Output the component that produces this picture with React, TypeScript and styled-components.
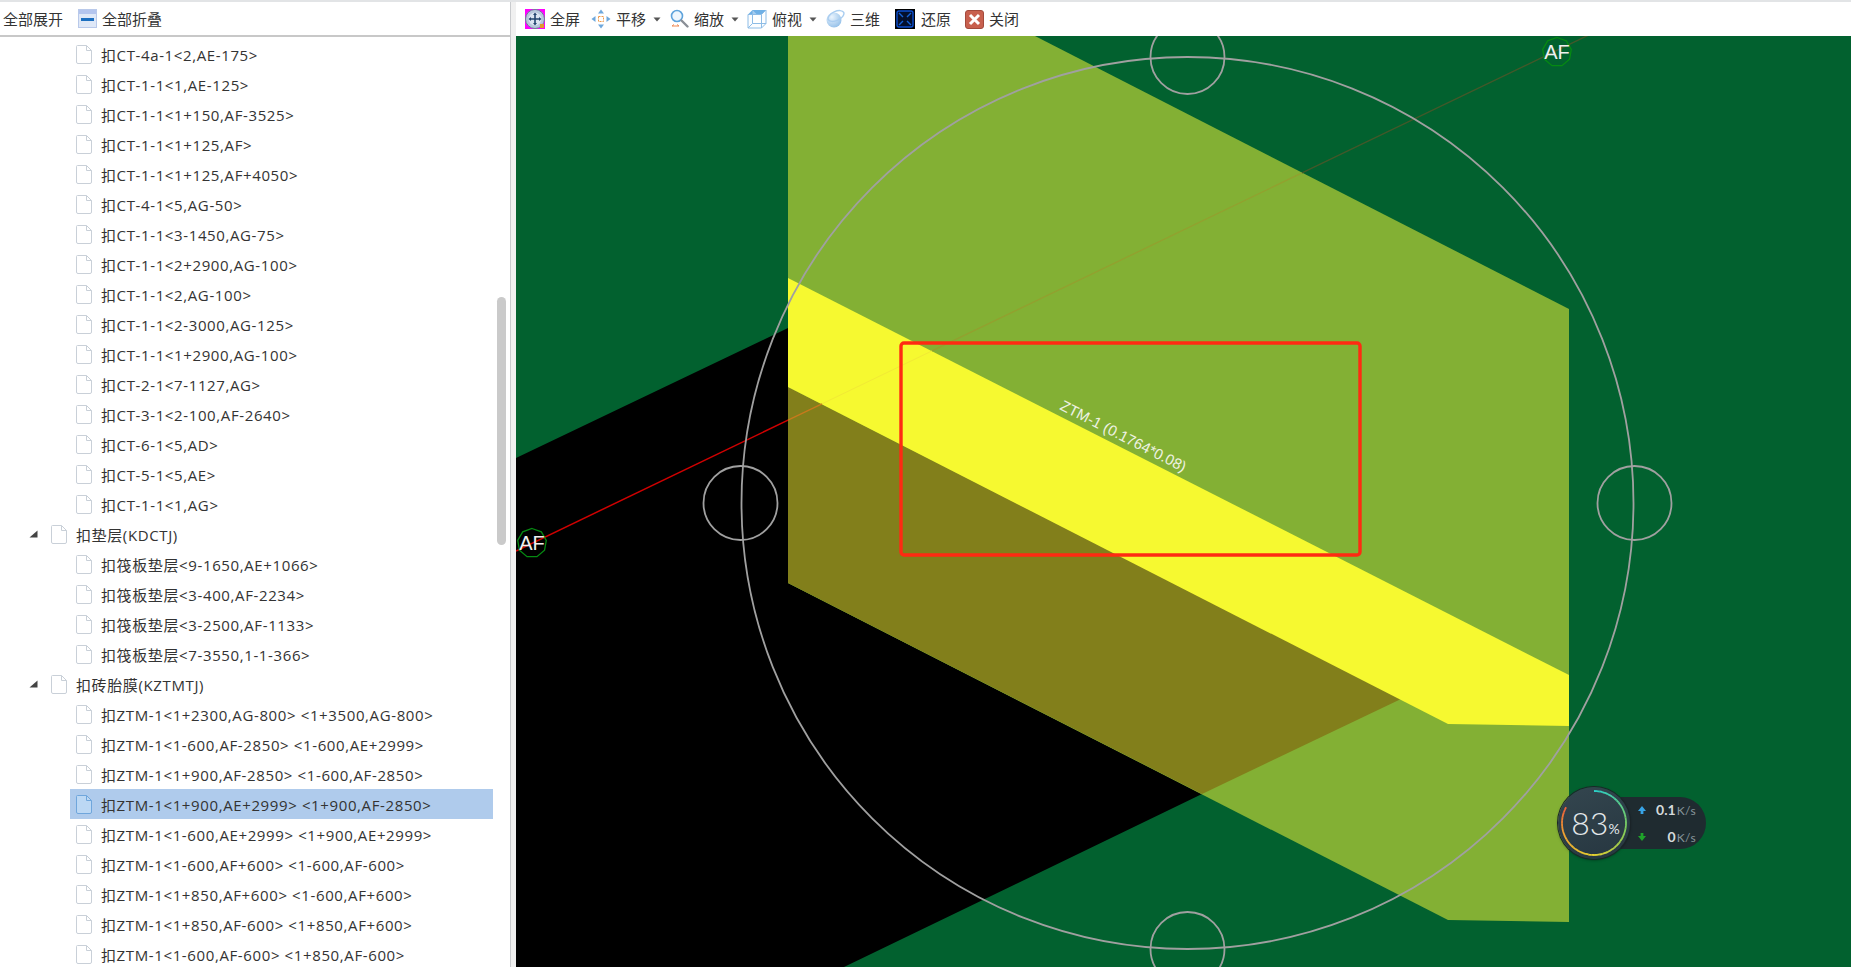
import React from "react";
import styled, { createGlobalStyle } from "styled-components";

const GlobalStyle = createGlobalStyle`
  html, body {
    margin: 0;
    padding: 0;
    height: 100%;
    overflow: hidden;
    background: #fff;
  }
  #root {
    height: 100%;
  }
`;

const Page = styled.div`
  display: flex;
  width: 1851px;
  height: 967px;
  overflow: hidden;
  box-sizing: border-box;
  border-top: 2px solid #e2e4e6;
  font-family: "Noto Sans CJK SC", "Noto Sans", sans-serif;
  font-size: 15px;
  color: #333;
  background: #f0f0f0;
`;

const LeftPane = styled.div`
  display: flex;
  flex-direction: column;
  width: 511px;
  flex: none;
  background: #fff;
  border-right: 1px solid #c9cbce;
  box-sizing: border-box;
`;

const RightPane = styled.div`
  display: flex;
  flex-direction: column;
  margin-left: 5px;
  width: 1335px;
  flex: none;
`;

const ToolbarLeft = styled.div`
  display: flex;
  align-items: center;
  height: 33px;
  flex: none;
  padding-left: 3px;
  background: #fff;
  border-bottom: 2px solid #c8c8c8;
`;

const ToolbarRight = styled.div`
  display: flex;
  align-items: center;
  height: 34px;
  flex: none;
  padding-left: 9px;
  background: #fff;
`;

const ToolButton = styled.div<{ $gap?: number; $mr?: number }>`
  display: flex;
  align-items: center;
  gap: ${(p) => p.$gap ?? 5}px;
  margin-right: ${(p) => p.$mr ?? 0}px;
  line-height: 20px;
  white-space: nowrap;
`;

const TreeArea = styled.div`
  display: flex;
  flex: 1;
  min-height: 0;
  overflow: hidden;
`;

const TreeList = styled.div`
  flex: 1;
  padding-top: 2px;
`;

const ScrollTrack = styled.div`
  width: 9px;
  flex: none;
  margin-right: 4px;
  padding-top: 260px;
`;

const ScrollThumb = styled.div`
  height: 248px;
  border-radius: 5px;
  background: #cacaca;
`;

const Row = styled.div<{ $level: number }>`
  display: flex;
  align-items: center;
  height: 30px;
  padding-left: ${(p) => (p.$level === 0 ? 29 : 70)}px;
`;

const Twist = styled.svg`
  flex: none;
  width: 9px;
  height: 8px;
  margin-right: 13px;
`;

const RowBody = styled.div<{ $selected?: boolean; $level: number }>`
  display: flex;
  align-items: center;
  gap: 9px;
  height: 30px;
  width: ${(p) => (p.$level === 0 ? "auto" : "423px")};
  padding-left: ${(p) => (p.$level === 0 ? 0 : 6)}px;
  box-sizing: border-box;
  background: ${(p) => (p.$selected ? "#afcbec" : "transparent")};
  white-space: nowrap;
`;

const RowLabel = styled.span`
  font-family: "Open Sans", "Noto Sans CJK SC", sans-serif;
  letter-spacing: 0.62px;
`;

const CanvasWrap = styled.div`
  position: relative;
  flex: 1;
  min-height: 0;
  overflow: hidden;
`;

const Scene = styled.svg`
  display: block;
  width: 1335px;
  height: 931px;
`;

const Monitor = styled.div`
  position: absolute;
  left: 1042px;
  top: 751px;
  display: flex;
  align-items: center;
  font-family: Lato, "Liberation Sans", sans-serif;
`;

const Dial = styled.div`
  position: relative;
  z-index: 1;
  display: flex;
  align-items: center;
  justify-content: center;
  width: 72px;
  height: 72px;
  padding-left: 3px;
  box-sizing: border-box;
  border-radius: 50%;
  background: linear-gradient(160deg, #34464f, #263640);
  box-shadow: 0 0 0 1px #1c2529, 0 1px 3px rgba(0, 0, 0, 0.5);
  color: #e3e8ea;
`;

const DialRing = styled.svg`
  position: absolute;
  left: 0;
  top: 0;
  width: 72px;
  height: 72px;
`;

const DialValue = styled.span`
  font-family: Lato, sans-serif;
  font-weight: 300;
  font-size: 32px;
  line-height: 1;
`;

const DialUnit = styled.span`
  font-size: 14px;
  margin-top: 11px;
  font-weight: 400;
`;

const SpeedPill = styled.div`
  display: flex;
  flex-direction: column;
  justify-content: center;
  gap: 13px;
  width: 85px;
  height: 52px;
  margin-left: -9px;
  padding: 0 10px 0 17px;
  box-sizing: border-box;
  border-radius: 0 26px 26px 0;
  background: #1f2b30;
`;

const SpeedRow = styled.div`
  display: flex;
  align-items: baseline;
  justify-content: flex-end;
  position: relative;
  height: 14px;
  line-height: 14px;
`;

const SpeedArrow = styled.svg`
  position: absolute;
  left: -1px;
  top: 2px;
  width: 10px;
  height: 10px;
`;

const SpeedValue = styled.span`
  font-size: 14px;
  font-weight: 700;
  color: #d5dadc;
`;

const SpeedUnit = styled.span`
  font-size: 12px;
  letter-spacing: 0.4px;
  margin-left: 1px;
  color: #88969c;
`;

const FileIcon = ({ selected }: { selected?: boolean }) => (
  <svg width="16" height="19" viewBox="0 0 16 19" style={{ flex: "none" }}>
    <path
      d="M0.5 1.5 Q0.5 0.5 1.5 0.5 H10.5 L15.5 5.5 V17 Q15.5 18.5 14 18.5 H2 Q0.5 18.5 0.5 17 Z"
      fill={selected ? "#bcd8f4" : "#fff"}
      stroke={selected ? "#6fa6dc" : "#c9d0d8"}
    />
    <path d="M10.5 0.5 V5.5 H15.5" fill="none" stroke={selected ? "#6fa6dc" : "#c9d0d8"} />
  </svg>
);

const Caret = () => (
  <svg width="8" height="5" viewBox="0 0 8 5" style={{ flex: "none" }}>
    <path d="M0.5 0.5 H7.5 L4 4.5 Z" fill="#555" />
  </svg>
);

const CollapseIcon = () => (
  <svg width="19" height="19" viewBox="0 0 19 19" style={{ flex: "none" }}>
    <rect x="0" y="0" width="19" height="19" fill="#dfe8f7" />
    <rect x="0" y="0" width="19" height="5" fill="#b4c5ee" />
    <rect x="0.5" y="0.5" width="18" height="18" fill="none" stroke="#b9c9ea" />
    <rect x="3" y="9" width="13" height="3" fill="#1c6fc0" />
  </svg>
);

const FullIcon = () => (
  <svg width="20" height="20" viewBox="0 0 20 20" style={{ flex: "none" }}>
    <rect width="20" height="20" fill="#ff00ff" />
    <circle cx="10" cy="10" r="9.5" fill="#b7c7dc" stroke="#6d7f97" />
    <circle cx="10" cy="10" r="6.5" fill="#dbe5f2" />
    <path
      d="M10 3.5 L12 6 H10.8 V9.2 H14 V8 L16.5 10 L14 12 V10.8 H10.8 V14 H12 L10 16.5 L8 14 H9.2 V10.8 H6 V12 L3.5 10 L6 8 V9.2 H9.2 V6 H8 Z"
      fill="#23456f"
    />
    <rect x="15" y="15" width="4" height="4" fill="#e09a2c" />
  </svg>
);

const PanIcon = () => (
  <svg width="20" height="20" viewBox="0 0 20 20" style={{ flex: "none" }}>
    <g fill="#6fa8dc">
      <path d="M10 0.5 L13 4.5 H7 Z" />
      <path d="M10 19.5 L13 15.5 H7 Z" />
      <path d="M0.5 10 L4.5 7 V13 Z" />
      <path d="M19.5 10 L15.5 7 V13 Z" />
    </g>
    <rect x="7.5" y="7.5" width="5" height="5" fill="#fff" stroke="#ef9a4a" strokeDasharray="2 1" />
  </svg>
);

const ZoomIcon = () => (
  <svg width="20" height="20" viewBox="0 0 20 20" style={{ flex: "none" }}>
    <circle cx="8" cy="7" r="5.5" fill="#eef6fd" stroke="#5ea3dc" strokeWidth="1.6" />
    <path d="M12.5 11.5 L18.5 17.5" stroke="#8a8f96" strokeWidth="2.4" strokeLinecap="round" />
    <path d="M3 17 H10 M3 17 L5 15.5 M10 17 L8 15.5" stroke="#ee8a55" strokeWidth="1" fill="none" />
  </svg>
);

const CubeIcon = () => (
  <svg width="20" height="20" viewBox="0 0 20 20" style={{ flex: "none" }}>
    <path d="M1 5.5 L5.5 1 H19 L14.5 5.5 Z" fill="#6fb0e6" />
    <path
      d="M1 5.5 H14.5 V19 H1 Z M14.5 5.5 L19 1 V14.5 L14.5 19 M5.5 1 V14.5 H19 M5.5 14.5 L1 19"
      fill="#f4f9fe"
      fillOpacity="0.4"
      stroke="#8dbce6"
    />
  </svg>
);

const PlanetIcon = () => (
  <svg width="20" height="20" viewBox="0 0 20 20" style={{ flex: "none" }}>
    <defs>
      <radialGradient id="planet" cx="35%" cy="30%" r="80%">
        <stop offset="0%" stopColor="#eaf4fd" />
        <stop offset="100%" stopColor="#8fbde8" />
      </radialGradient>
    </defs>
    <circle cx="9" cy="11" r="7.5" fill="url(#planet)" />
    <ellipse
      cx="11"
      cy="7"
      rx="8.5"
      ry="4.5"
      transform="rotate(-25 11 7)"
      fill="none"
      stroke="#a9cdf0"
      strokeWidth="1.4"
    />
  </svg>
);

const RestoreIcon = () => (
  <svg width="20" height="20" viewBox="0 0 20 20" style={{ flex: "none" }}>
    <rect width="20" height="20" fill="#000" />
    <rect x="2" y="2" width="16" height="16" rx="2" fill="#04102c" stroke="#0c4fd0" strokeWidth="1.4" />
    <path d="M4 4 L8 8 M16 4 L12 8 M4 16 L8 12 M16 16 L12 12" stroke="#1563d8" strokeWidth="1.4" />
  </svg>
);

const CloseIcon = () => (
  <svg width="19" height="19" viewBox="0 0 19 19" style={{ flex: "none" }}>
    <rect x="0.5" y="0.5" width="18" height="18" rx="2.5" fill="#c8604e" stroke="#a34a3c" />
    <path d="M5 5 L14 14 M14 5 L5 14" stroke="#fff" strokeWidth="3" />
  </svg>
);

interface TreeRow {
  text: string;
  level: number;
  selected?: boolean;
}

const child = (text: string, selected?: boolean): TreeRow => ({ text, level: 1, selected });

const rows: TreeRow[] = [
  child("扣CT-4a-1<2,AE-175>"),
  child("扣CT-1-1<1,AE-125>"),
  child("扣CT-1-1<1+150,AF-3525>"),
  child("扣CT-1-1<1+125,AF>"),
  child("扣CT-1-1<1+125,AF+4050>"),
  child("扣CT-4-1<5,AG-50>"),
  child("扣CT-1-1<3-1450,AG-75>"),
  child("扣CT-1-1<2+2900,AG-100>"),
  child("扣CT-1-1<2,AG-100>"),
  child("扣CT-1-1<2-3000,AG-125>"),
  child("扣CT-1-1<1+2900,AG-100>"),
  child("扣CT-2-1<7-1127,AG>"),
  child("扣CT-3-1<2-100,AF-2640>"),
  child("扣CT-6-1<5,AD>"),
  child("扣CT-5-1<5,AE>"),
  child("扣CT-1-1<1,AG>"),
  { text: "扣垫层(KDCTJ)", level: 0 },
  child("扣筏板垫层<9-1650,AE+1066>"),
  child("扣筏板垫层<3-400,AF-2234>"),
  child("扣筏板垫层<3-2500,AF-1133>"),
  child("扣筏板垫层<7-3550,1-1-366>"),
  { text: "扣砖胎膜(KZTMTJ)", level: 0 },
  child("扣ZTM-1<1+2300,AG-800> <1+3500,AG-800>"),
  child("扣ZTM-1<1-600,AF-2850> <1-600,AE+2999>"),
  child("扣ZTM-1<1+900,AF-2850> <1-600,AF-2850>"),
  child("扣ZTM-1<1+900,AE+2999> <1+900,AF-2850>", true),
  child("扣ZTM-1<1-600,AE+2999> <1+900,AE+2999>"),
  child("扣ZTM-1<1-600,AF+600> <1-600,AF-600>"),
  child("扣ZTM-1<1+850,AF+600> <1-600,AF+600>"),
  child("扣ZTM-1<1+850,AF-600> <1+850,AF+600>"),
  child("扣ZTM-1<1-600,AF-600> <1+850,AF-600>"),
];

// y of the AF axis at a given x
const axisY = (x: number) => 551 - 0.481 * (x - 516);

const axisParts = [
  { from: 516, to: 788, color: "#d00000", width: 1.5 },
  { from: 788, to: 822, color: "#c87a1c", width: 1.3 },
  { from: 822, to: 932, color: "#f2ea35", width: 1 },
  { from: 932, to: 1302, color: "#93a02f", width: 1.3 },
  { from: 1302, to: 1590, color: "#42582a", width: 1.4 },
];

const mix = (a: number[], b: number[], t: number) =>
  a.map((v, i) => Math.round(v + (b[i] - v) * t));

const ringStops = [
  { at: 0, c: [44, 208, 200] },
  { at: 100, c: [130, 205, 90] },
  { at: 180, c: [232, 210, 48] },
  { at: 250, c: [240, 160, 50] },
  { at: 299, c: [238, 90, 60] },
];

const ringColor = (deg: number) => {
  for (let i = 1; i < ringStops.length; i++) {
    if (deg <= ringStops[i].at) {
      const s = ringStops[i - 1];
      const e = ringStops[i];
      const [r, g, b] = mix(s.c, e.c, (deg - s.at) / (e.at - s.at));
      return `rgb(${r},${g},${b})`;
    }
  }
  return "rgb(238,90,60)";
};

const polar = (deg: number, r: number) => {
  const a = ((deg - 90) * Math.PI) / 180;
  return [36 + r * Math.cos(a), 36 + r * Math.sin(a)];
};

const ringParts = Array.from({ length: 60 }, (_, i) => {
  const start = (i * 299) / 60;
  const end = ((i + 1) * 299) / 60 + 0.4;
  const [x1, y1] = polar(start, 32);
  const [x2, y2] = polar(end, 32);
  return { d: `M${x1} ${y1} A32 32 0 0 1 ${x2} ${y2}`, color: ringColor(start) };
});

const AxisBubble = ({ x, y }: { x: number; y: number }) => {
  const pts = Array.from({ length: 9 }, (_, i) => {
    const a = (i * 2 * Math.PI) / 9 - Math.PI / 2;
    return `${x + 14.5 * Math.cos(a)},${y + 14.5 * Math.sin(a)}`;
  }).join(" ");
  return (
    <>
      <polygon points={pts} fill="none" stroke="#068a12" strokeWidth="1.3" />
      <text
        x={x}
        y={y + 7}
        textAnchor="middle"
        fill="#f0f0f0"
        fontSize="20"
        fontFamily="Liberation Sans, sans-serif"
      >
        AF
      </text>
    </>
  );
};

const App = () => {
  return (
    <Page>
      <GlobalStyle />
      <LeftPane>
        <ToolbarLeft>
          <ToolButton $mr={15}>全部展开</ToolButton>
          <ToolButton>
            <CollapseIcon />
            全部折叠
          </ToolButton>
        </ToolbarLeft>
        <TreeArea>
          <TreeList>
            {rows.map((row, i) => (
              <Row key={i} $level={row.level}>
                {row.level === 0 && (
                  <Twist viewBox="0 0 9 8">
                    <path d="M8.5 0.5 V7.5 H0.5 Z" fill="#444" />
                  </Twist>
                )}
                <RowBody $level={row.level} $selected={row.selected}>
                  <FileIcon selected={row.selected} />
                  <RowLabel>{row.text}</RowLabel>
                </RowBody>
              </Row>
            ))}
          </TreeList>
          <ScrollTrack>
            <ScrollThumb />
          </ScrollTrack>
        </TreeArea>
      </LeftPane>
      <RightPane>
        <ToolbarRight>
          <ToolButton $mr={11}>
            <FullIcon />
            全屏
          </ToolButton>
          <ToolButton $mr={7}>
            <PanIcon />
            平移
          </ToolButton>
          <ToolButton $mr={8}>
            <Caret />
          </ToolButton>
          <ToolButton $mr={7}>
            <ZoomIcon />
            缩放
          </ToolButton>
          <ToolButton $mr={8}>
            <Caret />
          </ToolButton>
          <ToolButton $mr={7}>
            <CubeIcon />
            俯视
          </ToolButton>
          <ToolButton $mr={8}>
            <Caret />
          </ToolButton>
          <ToolButton $mr={15}>
            <PlanetIcon />
            三维
          </ToolButton>
          <ToolButton $gap={6} $mr={14}>
            <RestoreIcon />
            还原
          </ToolButton>
          <ToolButton>
            <CloseIcon />
            关闭
          </ToolButton>
        </ToolbarRight>
        <CanvasWrap>
          <Scene viewBox="516 36 1335 931">
            <rect x="516" y="36" width="1335" height="931" fill="#02612f" />
            <polygon
              points="516,458 788,328 788,583 1202,794 844,967 516,967"
              fill="#000"
            />
            <polygon
              points="788,36 1035,36 1569,309 1569,922 1448,920 788,583"
              fill="#83b034"
            />
            <polygon points="788,387 1401,699 1202,794 788,583" fill="#827f1b" />
            <polygon
              points="788,278 1569,675 1569,726 1448,724 788,387"
              fill="#f6f930"
            />
            {axisParts.map((p) => (
              <line
                key={p.from}
                x1={p.from}
                y1={axisY(p.from)}
                x2={p.to}
                y2={axisY(p.to)}
                stroke={p.color}
                strokeWidth={p.width}
              />
            ))}
            <g fill="none" stroke="#a0a0a0" strokeWidth="1.8">
              <circle cx="1187.5" cy="503" r="446" />
              <circle cx="740.5" cy="503" r="37" />
              <circle cx="1634.5" cy="503" r="37" />
              <circle cx="1187.5" cy="57" r="37" />
              <circle cx="1187.5" cy="949" r="37" />
            </g>
            <rect
              x="901"
              y="343"
              width="459"
              height="212"
              rx="3"
              fill="none"
              stroke="#ff2a12"
              strokeWidth="3.4"
            />
            <text
              transform="translate(1059 409) rotate(27)"
              fill="#eef2e2"
              fontSize="15"
              fontFamily="Liberation Sans, sans-serif"
            >
              ZTM-1 (0.1764*0.08)
            </text>
            <AxisBubble x={532} y={543} />
            <AxisBubble x={1557} y={52} />
          </Scene>
          <Monitor>
            <Dial>
              <DialRing viewBox="0 0 72 72">
                {ringParts.map((p, i) => (
                  <path key={i} d={p.d} fill="none" stroke={p.color} strokeWidth="1.8" />
                ))}
              </DialRing>
              <DialValue>83</DialValue>
              <DialUnit>%</DialUnit>
            </Dial>
            <SpeedPill>
              <SpeedRow>
                <SpeedArrow viewBox="0 0 10 10">
                  <path d="M5 1 L9 6 H6.4 V9 H3.6 V6 H1 Z" fill="#38a4e6" />
                </SpeedArrow>
                <SpeedValue>0.1</SpeedValue>
                <SpeedUnit>K/s</SpeedUnit>
              </SpeedRow>
              <SpeedRow>
                <SpeedArrow viewBox="0 0 10 10">
                  <path d="M5 9 L9 4 H6.4 V1 H3.6 V4 H1 Z" fill="#1fa32a" />
                </SpeedArrow>
                <SpeedValue>0</SpeedValue>
                <SpeedUnit>K/s</SpeedUnit>
              </SpeedRow>
            </SpeedPill>
          </Monitor>
        </CanvasWrap>
      </RightPane>
    </Page>
  );
};

export default App;
